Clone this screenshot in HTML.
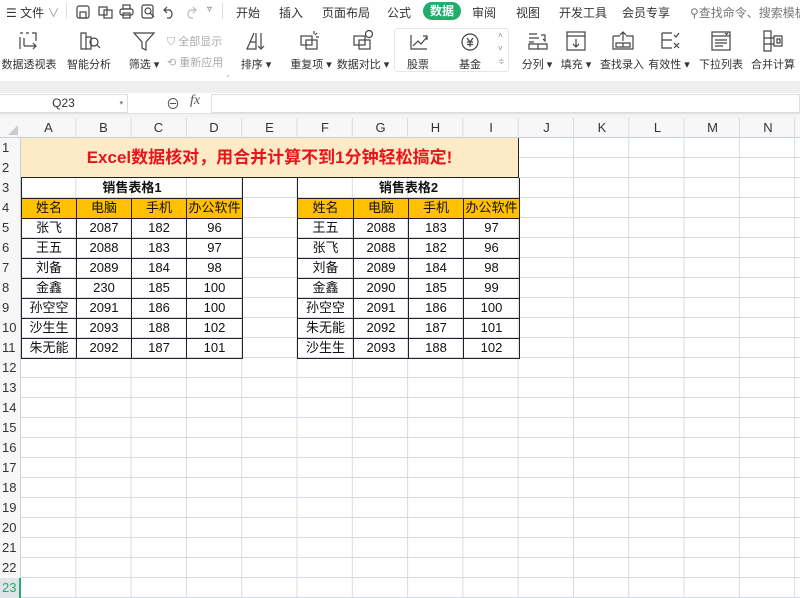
<!DOCTYPE html>
<html><head><meta charset="utf-8">
<style>
*{margin:0;padding:0;box-sizing:border-box}
body{width:800px;height:598px;overflow:hidden;background:#fff;font-family:"Liberation Sans","Noto Sans CJK SC",sans-serif;font-size:12px;color:#333;position:relative}
.a{position:absolute}
.t{position:absolute;white-space:nowrap;font-size:11px;color:#333;transform:translateX(-50%)}
.g{color:#aaa}
svg{position:absolute;overflow:visible}
svg *{fill:none;stroke:#444;stroke-width:1.2}
.ch{position:absolute;top:118px;height:20px;line-height:20px;text-align:center;font-size:13px;color:#333}
.rh{position:absolute;left:0;width:21px;height:20px;line-height:20px;text-align:left;padding-left:2px;font-size:13px;color:#333}
.tb{position:absolute;border-collapse:collapse;font-size:13px;color:#111}
.tb td{border:1px solid #222;height:20px;text-align:center;padding:0;line-height:18px}
.tb tr.h td{background:#ffc000}
</style></head><body>
<!-- menu bar -->
<div class="a" style="left:0;top:0;width:800px;height:24px;background:#fff"></div>
<div class="a" style="left:6px;top:4px;font-size:12px;color:#333">☰ 文件 <span style="color:#999">∨</span></div>
<div class="a" style="left:66px;top:3px;width:1px;height:16px;background:#ddd"></div>
<svg style="left:76px;top:5px" width="14" height="14"><rect x="1" y="1" width="12" height="12" rx="2"/><rect x="4" y="7" width="6" height="6"/></svg>
<svg style="left:98px;top:4px" width="15" height="15"><rect x="1" y="3" width="8" height="8"/><rect x="6" y="6" width="8" height="8"/></svg>
<svg style="left:119px;top:4px" width="15" height="15"><rect x="1" y="5" width="13" height="6" rx="2"/><rect x="4" y="1" width="7" height="4"/><rect x="4" y="9" width="7" height="5"/></svg>
<svg style="left:141px;top:4px" width="15" height="15"><rect x="1" y="1" width="11" height="13" rx="2"/><circle cx="7" cy="7" r="3"/><path d="M9 9l4 4"/></svg>
<svg style="left:163px;top:5px" width="13" height="13"><path d="M4 2L1 5l3 3M1 5h6a5 5 0 0 1 0 8H4"/></svg>
<svg style="left:184px;top:5px" width="13" height="13"><path style="stroke:#bbb" d="M9 2l3 3-3 3M12 5H6a5 5 0 0 0 0 8h3"/></svg>
<div class="a" style="left:207px;top:4px;color:#666;font-size:10px">▿</div>
<div class="a" style="left:222px;top:3px;width:1px;height:16px;background:#ddd"></div>
<div class="t" style="left:248px;top:4px;font-size:12px">开始</div>
<div class="t" style="left:291px;top:4px;font-size:12px">插入</div>
<div class="t" style="left:346px;top:4px;font-size:12px">页面布局</div>
<div class="t" style="left:399px;top:4px;font-size:12px">公式</div>
<div class="a" style="left:423px;top:2px;width:38px;height:18px;border-radius:9px;background:#21ad6b;color:#fff;font-size:12px;line-height:18px;text-align:center;font-weight:bold">数据</div>
<div class="t" style="left:484px;top:4px;font-size:12px">审阅</div>
<div class="t" style="left:528px;top:4px;font-size:12px">视图</div>
<div class="t" style="left:583px;top:4px;font-size:12px">开发工具</div>
<div class="t" style="left:646px;top:4px;font-size:12px">会员专享</div>
<div class="a" style="left:690px;top:4px;font-size:12px;color:#777;white-space:nowrap">⚲查找命令、搜索模板</div>

<!-- ribbon -->
<svg style="left:18px;top:31px" width="20" height="20"><path d="M2 2h3M8 2h3M14 2h4v8M2 6v12M6 7v8M6 15h12M15 12l3 3-3 3"/></svg>
<div class="t" style="left:29px;top:56px">数据透视表</div>
<svg style="left:79px;top:31px" width="22" height="20"><path d="M2 2h5v16H2zM7 6h5v12H7"/><circle cx="15" cy="11" r="4"/><path d="M18 14l3 3"/></svg>
<div class="t" style="left:89px;top:56px">智能分析</div>
<svg style="left:133px;top:31px" width="22" height="20"><path d="M1 2h20l-8 9v8l-4-2v-6z"/></svg>
<div class="t" style="left:144px;top:56px">筛选 ▾</div>
<div class="a g" style="left:167px;top:33px;font-size:11px">⛉ 全部显示</div>
<div class="a g" style="left:167px;top:54px;font-size:11px">⟲ 重新应用</div>
<svg style="left:245px;top:31px" width="22" height="20"><path d="M9 2L2 18h9V2M5 11h6M16 2v16M13 15l3 3 3-3"/></svg>
<div class="t" style="left:256px;top:56px">排序 ▾</div>
<svg style="left:299px;top:29px" width="22" height="22"><rect x="2" y="7" width="11" height="9"/><rect x="7" y="11" width="11" height="9"/><path d="M15 2v3M18 4l-2 2M20 8h-3"/></svg>
<div class="t" style="left:311px;top:56px">重复项 ▾</div>
<svg style="left:352px;top:29px" width="22" height="22"><rect x="2" y="7" width="11" height="9"/><rect x="7" y="11" width="11" height="9"/><circle cx="17" cy="5" r="3.5"/></svg>
<div class="t" style="left:363px;top:56px">数据对比 ▾</div>
<div class="a" style="left:394px;top:28px;width:115px;height:44px;border:1px solid #e6e6e6;border-radius:3px"></div>
<svg style="left:410px;top:34px" width="18" height="16"><path d="M1 1v14h16M3 12l5-5 3 3 6-7M13 2h4v4"/></svg>
<div class="t" style="left:418px;top:56px">股票</div>
<svg style="left:460px;top:32px" width="20" height="20"><circle cx="10" cy="10" r="8"/><path d="M7 6l3 4 3-4M10 10v5M7 10h6M7 12.5h6"/></svg>
<div class="t" style="left:470px;top:56px">基金</div>
<div class="a" style="left:498px;top:29px;color:#888;font-size:8px;line-height:13px">˄<br>˅<br>≑</div>
<svg style="left:528px;top:32px" width="20" height="18"><path d="M1 2h8M1 6h10M1 10h5M13 3h4v6l-2-2M1 12h18v5H1zM10 12v5"/></svg>
<div class="t" style="left:537px;top:56px">分列 ▾</div>
<svg style="left:566px;top:31px" width="20" height="20"><rect x="1" y="1" width="18" height="18"/><path d="M1 5h18M10 8v8M7 13l3 3 3-3"/></svg>
<div class="t" style="left:576px;top:56px">填充 ▾</div>
<svg style="left:612px;top:30px" width="22" height="20"><path d="M1 6h7M14 6h7v13H1V6M11 2v9M8 5l3-3 3 3M4 13h14v4H4zM11 13v4"/></svg>
<div class="t" style="left:622px;top:56px">查找录入</div>
<svg style="left:660px;top:31px" width="20" height="20"><path d="M2 2h10M2 2v7h10M2 9v8h10M14 4l2 2 3-4M14 12l5 5M19 12l-5 5"/></svg>
<div class="t" style="left:669px;top:56px">有效性 ▾</div>
<svg style="left:711px;top:31px" width="20" height="20"><rect x="1" y="1" width="18" height="18"/><path d="M1 5h18M4 9h12M4 12h12M4 15h8M14 2l1.5 1.5L17 2"/></svg>
<div class="t" style="left:721px;top:56px">下拉列表</div>
<svg style="left:762px;top:30px" width="22" height="22"><path d="M2 1h7v20H2zM2 8h7M2 14h7M9 8h3v6H9M12 6h8v10h-8zM15 9h3v4h-3z"/></svg>
<div class="t" style="left:773px;top:56px">合并计算</div>
<div class="a" style="left:226px;top:70px;font-size:7px;color:#999">⌟</div>

<!-- gray band -->
<div class="a" style="left:0;top:81px;width:800px;height:12px;background:#efefef"></div>
<!-- formula bar -->
<div class="a" style="left:0;top:93px;width:800px;height:21px;background:#fff;border-bottom:1px solid #e2e2e2"></div>
<div class="a" style="left:0;top:94px;width:128px;height:19px;border:1px solid #ddd;border-left:none;font-size:12px;line-height:17px;text-align:center;color:#333">Q23<span style="position:absolute;right:4px;font-size:7px;color:#777">▾</span></div>
<div class="a" style="left:166px;top:94px;font-size:14px;color:#555">⊖</div>
<div class="a" style="left:190px;top:93px;font-size:14px;font-style:italic;font-family:'Liberation Serif',serif;color:#555">fx</div>
<div class="a" style="left:211px;top:94px;width:589px;height:19px;border:1px solid #ddd"></div>
<div class="a" style="left:0;top:114px;width:800px;height:4px;background:#f3f3f3"></div>

<!-- grid -->
<div class="a" style="left:0;top:118px;width:800px;height:20px;background:#f7f7f7;border-bottom:1px solid #c8cfdc"></div>
<div class="a" style="left:0;top:138px;width:21px;height:460px;background:#f7f7f7;border-right:1px solid #c8cfdc"></div>
<div class="a" style="left:21px;top:138px;width:779px;height:460px;
background-image:linear-gradient(to bottom,transparent 19px,#d5dbe6 19px);background-size:100% 20px"></div>
<div class="a" style="left:21px;top:118px;width:779px;height:480px;
background-image:linear-gradient(to right,transparent 54.3px,#d5dbe6 54.3px);background-size:55.3px 100%"></div>
<svg style="left:7px;top:124px" width="12" height="12"><path style="fill:#ccc;stroke:none" d="M11 1v10H1z"/></svg>

<div class="ch" style="left:21px;width:55px">A</div>
<div class="ch" style="left:76px;width:55px">B</div>
<div class="ch" style="left:131px;width:55px">C</div>
<div class="ch" style="left:186px;width:56px">D</div>
<div class="ch" style="left:242px;width:55px">E</div>
<div class="ch" style="left:297px;width:56px">F</div>
<div class="ch" style="left:353px;width:55px">G</div>
<div class="ch" style="left:408px;width:55px">H</div>
<div class="ch" style="left:463px;width:56px">I</div>
<div class="ch" style="left:519px;width:55px">J</div>
<div class="ch" style="left:574px;width:56px">K</div>
<div class="ch" style="left:630px;width:55px">L</div>
<div class="ch" style="left:685px;width:55px">M</div>
<div class="ch" style="left:740px;width:56px">N</div>

<div class="rh" style="top:138px">1</div><div class="rh" style="top:158px">2</div><div class="rh" style="top:178px">3</div><div class="rh" style="top:198px">4</div><div class="rh" style="top:218px">5</div><div class="rh" style="top:238px">6</div><div class="rh" style="top:258px">7</div><div class="rh" style="top:278px">8</div><div class="rh" style="top:298px">9</div><div class="rh" style="top:318px">10</div><div class="rh" style="top:338px">11</div><div class="rh" style="top:358px">12</div><div class="rh" style="top:378px">13</div><div class="rh" style="top:398px">14</div><div class="rh" style="top:418px">15</div><div class="rh" style="top:438px">16</div><div class="rh" style="top:458px">17</div><div class="rh" style="top:478px">18</div><div class="rh" style="top:498px">19</div><div class="rh" style="top:518px">20</div><div class="rh" style="top:538px">21</div><div class="rh" style="top:558px">22</div>
<div class="rh" style="top:578px;background:#dfe3ea;color:#21ad6b">23</div>
<div class="a" style="left:19px;top:578px;width:2px;height:20px;background:#21ad6b"></div>

<!-- title -->
<div class="a" style="left:21px;top:138px;width:498px;height:40px;background:#fdebc8;border-right:1px solid #222;border-bottom:1px solid #222;color:#e8151b;font-weight:bold;font-size:17px;line-height:40px;text-align:center">Excel数据核对，用合并计算不到1分钟轻松搞定!</div>

<table class="tb" style="left:21px;top:178px;width:222px">
<tr><td colspan="4" style="font-weight:bold;border-top:none">销售表格1</td></tr>
<tr class="h"><td style="width:55px">姓名</td><td style="width:55px">电脑</td><td style="width:55px">手机</td><td>办公软件</td></tr>
<tr><td>张飞</td><td>2087</td><td>182</td><td>96</td></tr>
<tr><td>王五</td><td>2088</td><td>183</td><td>97</td></tr>
<tr><td>刘备</td><td>2089</td><td>184</td><td>98</td></tr>
<tr><td>金鑫</td><td>230</td><td>185</td><td>100</td></tr>
<tr><td>孙空空</td><td>2091</td><td>186</td><td>100</td></tr>
<tr><td>沙生生</td><td>2093</td><td>188</td><td>102</td></tr>
<tr><td>朱无能</td><td>2092</td><td>187</td><td>101</td></tr>
</table>
<table class="tb" style="left:297px;top:178px;width:223px">
<tr><td colspan="4" style="font-weight:bold;border-top:none">销售表格2</td></tr>
<tr class="h"><td style="width:56px">姓名</td><td style="width:55px">电脑</td><td style="width:55px">手机</td><td>办公软件</td></tr>
<tr><td>王五</td><td>2088</td><td>183</td><td>97</td></tr>
<tr><td>张飞</td><td>2088</td><td>182</td><td>96</td></tr>
<tr><td>刘备</td><td>2089</td><td>184</td><td>98</td></tr>
<tr><td>金鑫</td><td>2090</td><td>185</td><td>99</td></tr>
<tr><td>孙空空</td><td>2091</td><td>186</td><td>100</td></tr>
<tr><td>朱无能</td><td>2092</td><td>187</td><td>101</td></tr>
<tr><td>沙生生</td><td>2093</td><td>188</td><td>102</td></tr>
</table>
</body></html>
